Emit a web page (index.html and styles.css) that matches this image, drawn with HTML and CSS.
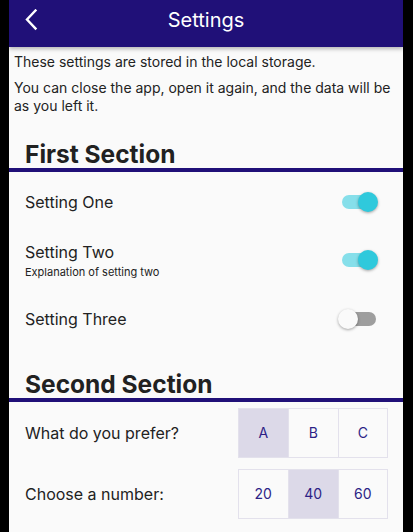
FILE: index.html
```html
<!DOCTYPE html>
<html>
<head>
<meta charset="utf-8">
<link rel="stylesheet" href="styles.css">
</head>
<body>
<div class="app">
  <header class="appbar">
    <svg class="back" width="14" height="22" viewBox="0 0 14 22"><polyline points="11.5,1.5 3,10.5 11.5,19.5" fill="none" stroke="#fff" stroke-width="2.4" stroke-linecap="square"/></svg>
    <h1 class="title">Settings</h1>
  </header>
  <main class="content">
    <div class="intro">
      <p>These settings are stored in the local storage.</p>
      <p>You can close the app, open it again, and the data will be as you left it.</p>
    </div>

    <section class="section">
      <h2 class="section-title">First Section</h2>
      <div class="list">
        <div class="row">
          <div class="label"><div class="name">Setting One</div></div>
          <div class="switch on"><span class="track"></span><span class="thumb"></span></div>
        </div>
        <div class="row">
          <div class="label"><div class="name">Setting Two</div><div class="sub">Explanation of setting two</div></div>
          <div class="switch on"><span class="track"></span><span class="thumb"></span></div>
        </div>
        <div class="row">
          <div class="label"><div class="name">Setting Three</div></div>
          <div class="switch"><span class="track"></span><span class="thumb"></span></div>
        </div>
      </div>
    </section>

    <section class="section second">
      <h2 class="section-title">Second Section</h2>
      <div class="list2">
        <div class="row2">
          <div class="name">What do you prefer?</div>
          <div class="seg">
            <span class="cell sel">A</span><span class="cell">B</span><span class="cell">C</span>
          </div>
        </div>
        <div class="row2">
          <div class="name">Choose a number:</div>
          <div class="seg">
            <span class="cell">20</span><span class="cell sel">40</span><span class="cell">60</span>
          </div>
        </div>
      </div>
    </section>
  </main>
</div>
</body>
</html>
```

FILE: styles.css
```css
* { box-sizing: border-box; }
html, body { margin: 0; padding: 0; background: #000; }
body { font-family: Inter, Roboto, "Noto Sans", sans-serif; color: #212121; }

.app {
  width: 394px;
  height: 532px;
  margin-left: 9px;
  background: #fafafa;
  overflow: hidden;
  position: relative;
}

.appbar {
  height: 47px;
  background: #201078;
  display: flex;
  align-items: center;
  justify-content: center;
  padding-bottom: 7px;
  position: relative;
  box-shadow: 0 2px 4px rgba(0,0,0,0.28);
  z-index: 1;
}
.back {
  position: absolute;
  left: 15px;
  top: 9px;
}
.title {
  margin: 0;
  font-weight: 400;
  font-size: 20px;
  color: #fff;
  line-height: 24px;
}

.intro { padding: 6px 5px 0 5px; }
.intro p {
  margin: 0 0 8px 0;
  font-size: 14px;
  line-height: 18px;
  color: #222;
}
.intro p:last-child { margin-bottom: 0; }

.section { margin-top: 24.6px; }
.section.second { margin-top: 23.6px; }
.section-title {
  margin: 0;
  padding-left: 16px;
  font-size: 24.5px;
  line-height: 28px;
  font-weight: 700;
  color: #212121;
  border-bottom: 4px solid #201078;
}

.list { padding: 5px 0 3px 0; }
.row {
  display: flex;
  align-items: center;
  justify-content: space-between;
  padding: 14px 25px 14px 16px;
}
.name {
  font-size: 16px;
  line-height: 22px;
  color: #222;
}
.sub {
  margin-top: 2px;
  font-size: 11px;
  line-height: 15px;
  color: #222;
}

.switch {
  width: 40px;
  height: 20px;
  position: relative;
}
.track {
  position: absolute;
  left: 4px;
  top: 3px;
  width: 34px;
  height: 14px;
  border-radius: 7px;
  background: #9e9e9e;
}
.thumb {
  position: absolute;
  left: 0;
  top: 0;
  width: 20px;
  height: 20px;
  border-radius: 50%;
  background: #fafafa;
  box-shadow: 0 1px 3px rgba(0,0,0,0.35);
}
.switch.on .track { background: #86dfea; }
.switch.on .thumb { left: 20px; background: #2fc9dc; }

.row2 {
  display: flex;
  align-items: center;
  justify-content: space-between;
  padding: 5.5px 15px 5.5px 16px;
}
.seg {
  display: flex;
  border: 1px solid #e3e1ec;
}
.cell {
  width: 49.5px;
  height: 48px;
  display: flex;
  align-items: center;
  justify-content: center;
  font-size: 14px;
  color: #2d1f86;
  background: #fafafa;
  border-left: 1px solid #e3e1ec;
}
.cell:first-child { border-left: none; }
.cell.sel { background: #dcd9e8; }
```
